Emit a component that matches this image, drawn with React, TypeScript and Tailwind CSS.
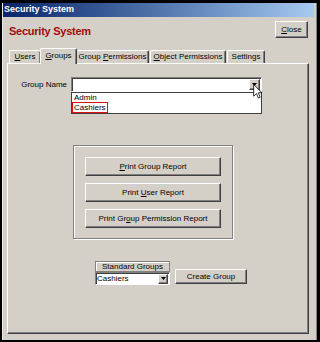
import type { ReactNode } from 'react';

const raised =
  'border border-t-white border-l-white border-r-[#404040] border-b-[#404040] shadow-[inset_-1px_-1px_#808080]';
const sunken =
  'border border-t-[#808080] border-l-[#808080] border-r-white border-b-white shadow-[inset_1px_1px_#404040]';

function Button({ children, className }: { children: ReactNode; className: string }) {
  return (
    <div
      className={`${raised} flex items-center justify-center bg-[#d4d0c8] text-[8px] leading-none text-black ${className}`}
    >
      <span>{children}</span>
    </div>
  );
}

function DownArrow() {
  return (
    <svg width="5" height="3" viewBox="0 0 5 3">
      <polygon points="0,0 5,0 2.5,3" fill="#000" />
    </svg>
  );
}

function DropButton({ className }: { className: string }) {
  return (
    <div className={`${raised} flex items-center justify-center bg-[#d4d0c8] ${className}`}>
      <DownArrow />
    </div>
  );
}

function Cursor() {
  return (
    <svg className="absolute left-[182px] top-[7px] z-20" width="10" height="15" viewBox="0 0 12 19">
      <path
        d="M0.5 0.5 L0.5 15.5 L4 12 L6.5 17.8 L8.8 16.8 L6.4 11.2 L11 11.2 Z"
        fill="#fff"
        stroke="#000"
        strokeWidth="1"
        strokeLinejoin="miter"
      />
    </svg>
  );
}

export default function App() {
  return (
    <div className="h-[342px] w-[320px] bg-black pb-[2px] pl-[2px] pr-[3px] pt-[3px] font-['Liberation_Sans',Arial,sans-serif]">
      <div className="flex h-full flex-col border-l border-[#ecebe6] bg-[#d4d0c8] pr-[3px] shadow-[inset_-1px_0_#808080]">
        {/* title bar */}
        <div className="flex h-[14px] items-center bg-gradient-to-r from-[#0a246a] to-[#a6caf0] pl-[1px] text-[9px] font-bold text-white">
          Security System
        </div>

        {/* header */}
        <div className="flex h-[31px] items-start justify-between pl-[6px] pr-[6px]">
          <div className="mt-[8px] text-[11px] font-bold leading-[12px] tracking-[-0.25px] text-[#a00a0a]">
            Security System
          </div>
          <Button className="mt-[4px] h-[17px] w-[33px]">
            <u>C</u>lose
          </Button>
        </div>

        {/* tabs */}
        <div className="flex h-[15px] items-end pl-[6px] text-[8px] leading-none text-black">
          <div className="flex h-[13px] w-[31px] items-center justify-center rounded-t-[2px] border-l border-t border-white shadow-[inset_-1px_0_#808080]">
            <span>
              <u>U</u>sers
            </span>
          </div>
          <div className="relative z-10 -mb-[1px] flex h-[16px] w-[37px] items-start justify-center rounded-t-[2px] border-l border-r border-t border-l-white border-r-[#404040] border-t-white bg-[#d4d0c8] pt-[3px] shadow-[inset_-1px_0_#808080]">
            <span>
              <u>G</u>roups
            </span>
          </div>
          <div className="flex h-[13px] w-[72px] items-center justify-center rounded-t-[2px] border-r border-t border-r-[#404040] border-t-white shadow-[inset_-1px_0_#808080]">
            <span>
              Group <u>P</u>ermissions
            </span>
          </div>
          <div className="ml-[1px] flex h-[13px] w-[76px] items-center justify-center rounded-t-[2px] border-l border-r border-t border-l-white border-r-[#404040] border-t-white shadow-[inset_-1px_0_#808080]">
            <span>
              <u>O</u>bject Permissions
            </span>
          </div>
          <div className="ml-[1px] flex h-[13px] w-[38px] items-center justify-center rounded-t-[2px] border-l border-r border-t border-l-white border-r-[#404040] border-t-white shadow-[inset_-1px_0_#808080]">
            <span>Settings</span>
          </div>
        </div>

        {/* tab page */}
        <div
          className={`mb-[6px] ml-[4px] mr-[5px] flex flex-1 flex-col ${raised} text-[8px] leading-none text-black`}
        >
          {/* group name */}
          <div className="mt-[13px] flex items-center">
            <div className="w-[59px] text-right">Group Name</div>
            <div className="relative ml-[4px]">
              <div className={`${sunken} flex h-[15px] w-[191px] items-center justify-end bg-white pr-[1px]`}>
                <DropButton className="h-[11px] w-[11px]" />
              </div>
              <Cursor />
              <div className="absolute left-0 top-[15px] z-10 flex h-[22px] w-[191px] flex-col border border-[#404040] bg-white">
                <div className="flex h-[9px] items-center pl-[2px]">Admin</div>
                <div className="flex h-[11px] w-[36px] items-center border border-[#e01010] pl-[1px]">Cashiers</div>
              </div>
            </div>
          </div>

          {/* report buttons */}
          <div className="ml-[65px] mt-[53px] flex h-[94px] w-[160px] flex-col gap-[7px] border border-[#808080] px-[11px] pt-[11px] shadow-[inset_1px_1px_#fff,1px_1px_#fff]">
            <Button className="h-[19px] w-[136px]">
              <u>P</u>rint Group Report
            </Button>
            <Button className="h-[19px] w-[136px]">
              Print <u>U</u>ser Report
            </Button>
            <Button className="h-[19px] w-[136px]">
              Print Gr<u>o</u>up Permission Report
            </Button>
          </div>

          {/* standard groups */}
          <div className="ml-[87px] mt-[22px] flex items-end gap-[5px]">
            <div className="flex w-[75px] flex-col">
              <div className="flex h-[11px] items-center justify-center border border-[#808080] shadow-[inset_1px_1px_#fff]">
                Standard Groups
              </div>
              <div className={`${sunken} flex h-[13px] items-center justify-between bg-white pl-[1px] pr-[1px]`}>
                <span>Cashiers</span>
                <DropButton className="h-[10px] w-[10px]" />
              </div>
            </div>
            <Button className="mb-[1px] h-[15px] w-[72px]">Create Group</Button>
          </div>
        </div>
      </div>
    </div>
  );
}
